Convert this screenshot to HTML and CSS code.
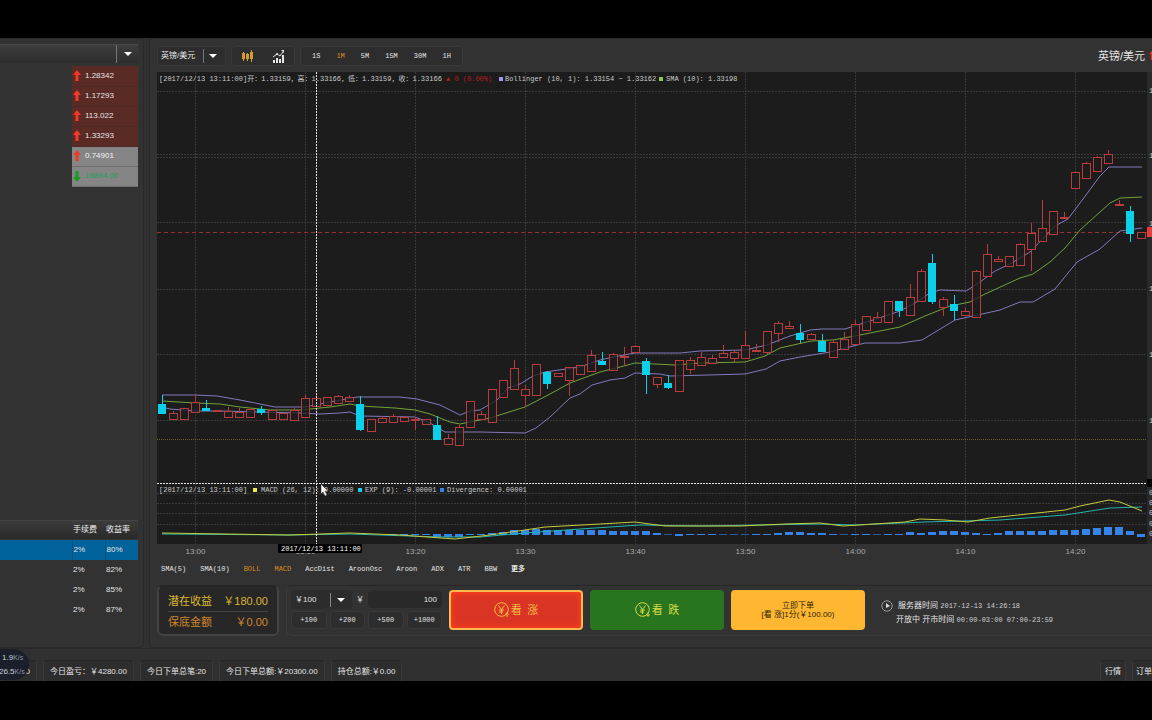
FILE: index.html
```html
<!DOCTYPE html>
<html lang="zh-CN">
<head>
<meta charset="utf-8">
<title>英镑/美元</title>
<link rel="stylesheet" href="styles.css">
</head>
<body>
<div class="app">
  <div class="workspace">
    <aside class="side">
      <div class="side-select"><button class="side-toggle" aria-label="展开"><span class="caret"></span></button></div>
      <table class="quotes">
        <tr><td><svg class="arrow up" viewBox="0 0 8 12"><path d="M4 0 8 5H5.500v6h-3V5H0z"/></svg>1.28342</td></tr>
        <tr><td><svg class="arrow up" viewBox="0 0 8 12"><path d="M4 0 8 5H5.500v6h-3V5H0z"/></svg>1.17293</td></tr>
        <tr><td><svg class="arrow up" viewBox="0 0 8 12"><path d="M4 0 8 5H5.500v6h-3V5H0z"/></svg>113.022</td></tr>
        <tr><td><svg class="arrow up" viewBox="0 0 8 12"><path d="M4 0 8 5H5.500v6h-3V5H0z"/></svg>1.33293</td></tr>
        <tr class="flat"><td><svg class="arrow up" viewBox="0 0 8 12"><path d="M4 0 8 5H5.500v6h-3V5H0z"/></svg>0.74901</td></tr>
        <tr class="flat down"><td><svg class="arrow" viewBox="0 0 8 12"><path d="M4 12 8 7H5.500V1h-3v6H0z"/></svg>16894.00</td></tr>
      </table>
      <table class="rates">
        <thead><tr><th></th><th>手续费</th><th>收益率</th></tr></thead>
        <tbody>
          <tr class="selected"><td></td><td>2%</td><td>80%</td></tr>
          <tr><td></td><td>2%</td><td>82%</td></tr>
          <tr><td></td><td>2%</td><td>85%</td></tr>
          <tr><td></td><td>2%</td><td>87%</td></tr>
        </tbody>
      </table>
    </aside>

    <main class="main">
      <header class="toolbar">
        <div class="group pick">
          <select class="pair" aria-label="品种"><option>英镑/美元</option></select>
          <span class="caret"></span>
        </div>
        <div class="group types">
          <button aria-label="蜡烛图"><svg width="12" height="14" viewBox="0 0 12 14" fill="#d29a31"><path d="M1 3h1v1h1v6H2v2H1v-2H0V4h1zM5 4h1v1h1v5H6v2H5v-2H4V5h1zM9 1h1v2h1v7h-1v3H9v-3H8V3h1z"/></svg></button>
          <button aria-label="指标"><svg width="12" height="13" viewBox="0 0 12 13" fill="#e6e6e6"><path d="M0 10h2v3H0zM3 8h2v5H3zM6 9h2v4H6zM9 5h2v8H9z"/><path d="M0 7 4 4l3 2 3-4" fill="none" stroke="#e6e6e6"/><circle cx="4" cy="4" r="1"/><path d="M8 0h3v3z"/></svg></button>
        </div>
        <div class="group periods">
          <button>1S</button><button class="on">1M</button><button>5M</button><button>15M</button><button>30M</button><button>1H</button>
        </div>
        <h1 class="title">英镑/美元<svg width="7" height="10" viewBox="0 0 8 12"><path fill="#e23a2a" d="M4 0 8 5H6v7H2V5H0z"/></svg></h1>
      </header>

      <svg class="chart" id="chart" viewBox="157 72 995 486" role="img" aria-label="英镑/美元 1M"></svg>

      <nav class="indicators">
        <button>SMA(5)</button><button>SMA(10)</button><button class="on">BOLL</button><button class="on">MACD</button><button>AccDist</button><button>AroonOsc</button><button>Aroon</button><button>ADX</button><button>ATR</button><button>BBW</button><button class="more">更多</button>
      </nav>

      <section class="trade">
        <dl class="payout">
          <div><dt>潜在收益</dt><dd>￥180.00</dd></div>
          <div class="floor"><dt>保底金额</dt><dd>￥0.00</dd></div>
        </dl>
        <div class="order">
          <div class="amount">
            <div class="amount-row">
              <div class="preset"><select aria-label="金额"><option>￥100</option></select><span class="caret"></span></div>
              <label for="sum">￥</label>
              <input id="sum" type="text" value="100">
            </div>
            <div class="adds"><button>+100</button><button>+200</button><button>+500</button><button>+1000</button></div>
          </div>
          <button class="action rise"><svg width="16" height="16" viewBox="0 0 16 16"><circle cx="7.500" cy="7.500" r="6.800"/><path d="M4.500 3.500l3 4 3-4M7.500 7.500V12M5 8h5M5 10h4M13 15v-4M11.500 12.500l1.500-2 1.500 2"/></svg>看&ensp;涨</button>
          <button class="action fall"><svg width="16" height="16" viewBox="0 0 16 16"><circle cx="7.500" cy="7.500" r="6.800"/><path d="M4.500 3.500l3 4 3-4M7.500 7.500V12M5 8h5M5 10h4M13 10v4M11.500 12.500l1.500 2 1.500-2"/></svg>看&ensp;跌</button>
          <button class="action submit"><span>立即下单</span><span>[看 涨]1分(￥100.00)</span></button>
          <div class="clock">
            <svg width="12" height="12" viewBox="0 0 12 12"><circle cx="6" cy="6" r="5.200" fill="none" stroke="#999"/><path d="M5 3v5l4-2z" fill="#ddd"/></svg>
            <p>服务器时间 <span>2017-12-13 14:26:18</span></p>
            <p class="hours">开放中 开市时间 <span>00:00-03:00 07:00-23:59</span></p>
          </div>
        </div>
      </section>
    </main>
  </div>

  <footer class="status">
    <span class="chip first">.0</span>
    <span class="chip">今日盈亏：￥4280.00</span>
    <span class="chip">今日下单总笔:20</span>
    <span class="chip">今日下单总额:￥20300.00</span>
    <span class="chip">持仓总额:￥0.00</span>
    <button class="chip tab">行情</button>
    <button class="chip orders">订单</button>
    <div class="speed"><span>1.9<small>K/s</small></span><span>26.5<small>K/s</small></span></div>
  </footer>
</div>
<script src="chart.js"></script>
</body>
</html>
```

FILE: styles.css
```css
* { box-sizing: border-box; }

body {
  margin: 0;
  background: #000;
  color: #e4e4e4;
  font: 8px/10px "Liberation Sans", "Noto Sans CJK SC", sans-serif;
  overflow: hidden;
}

button, select, input {
  margin: 0;
  padding: 0;
  border: 0;
  background: none;
  color: inherit;
  font: inherit;
  appearance: none;
  white-space: nowrap;
}

h1, p, dl, dd { margin: 0; }
table { border-collapse: collapse; }
th, td { padding: 0; text-align: left; font-weight: normal; }

.app {
  display: flex;
  flex-direction: column;
  height: 100vh;
  border: solid #000;
  border-width: 38px 0 39px;
  background: #303030;
}

.workspace { display: flex; flex: 1; min-height: 0; gap: 5px; border-bottom: 1px solid #292929; }

.caret {
  width: 0;
  height: 0;
  border: 4px solid transparent;
  border-top-color: #fff;
  border-bottom: 0;
  pointer-events: none;
}

/* left column */
.side {
  display: flex;
  flex-direction: column;
  justify-content: space-between;
  width: 144px;
  padding: 5px 5px 27px 0;
  border: 1px solid #292929;
  border-left: 0;
  border-radius: 0 0 5px 0;
  background: #323232;
}
.side-select {
  display: flex;
  justify-content: flex-end;
  height: 19px;
  margin-bottom: 3px;
  border-top: 1px solid #484848;
  background: linear-gradient(#3d3d3d, #2d2d2d);
}
.side-toggle { display: grid; place-items: center; width: 22px; border-left: 1px solid #777; }

.quotes { width: 66px; margin: 0 0 auto auto; }
.quotes td { height: 20px; background: #5a2a25; border-bottom: 1px solid #4c2925; }
.quotes .flat td { background: #858585; border-color: #6e6e6e; color: #f4f4f4; }
.quotes .down td { color: #20a060; }
.arrow { width: 8px; height: 12px; margin: 0 4px 0 1px; fill: #169c23; vertical-align: middle; }
.arrow.up { fill: #f23a2a; }

.rates { width: 100%; table-layout: fixed; }
.rates th { height: 20px; background: linear-gradient(#3c3c3c, #292929); color: #f0f0f0; border-top: 1px solid #444; }
.rates td { height: 20px; padding-left: 1px; }
.rates th:nth-child(2), .rates th:nth-child(3) { width: 33px; padding-left: 1px; }
.rates .selected td { background: #02639c; }
.rates .selected td + td { border-left: 1px solid #075080; }

/* chart column */
.main {
  display: flex;
  flex: 1;
  flex-direction: column;
  min-width: 0;
  padding: 7px 0 11px 7px;
  border: 1px solid #292929;
  border-right: 0;
  border-radius: 0 0 0 5px;
  background: #323232;
}
.toolbar { display: flex; align-items: center; height: 20px; margin-bottom: 6px; gap: 5px; }
.group { display: flex; align-items: center; height: 20px; border: 1px solid #393939; border-radius: 4px; background: #2d2d2d; }
.pick { width: 69px; padding-left: 3px; }
.pair { width: 43px; height: 14px; border-right: 1px solid #777; }
.pick .caret { margin-left: 5px; }
.types { width: 64px; }
.types button { display: grid; flex: 1; place-items: center; }
.periods { padding: 0 3px; font-family: "Liberation Mono", monospace; font-size: 7px; }
.periods button { padding: 0 8px; }
.on { color: #dc8b1c; }
.title { margin-left: auto; width: 54px; overflow: hidden; white-space: nowrap; font-size: 11px; line-height: 18px; font-weight: normal; }
.title svg { margin-left: 4px; }

.chart { display: block; width: 100%; height: auto; }
.chart text { fill: #c9c9c9; font: 7px "Liberation Mono", "Noto Sans CJK SC", monospace; white-space: pre; }
.chart .tick { fill: #aaa; font: 8px "Liberation Sans", sans-serif; text-anchor: middle; }
.chart .loss { fill: #b32018; }
.chart .now { fill: #fff; }
.grid { stroke: #3a3a3a; stroke-dasharray: 2 1; }
.line { fill: none; stroke-width: 1; }

.indicators { display: flex; align-items: center; gap: 14px; height: 22px; margin: 0 0 5px 4px; font-family: "Liberation Mono", "Noto Sans CJK SC", monospace; font-size: 7px; }
.more { font-weight: bold; }

.trade { display: flex; gap: 7px; height: 51px; }
.payout {
  width: 122px;
  padding: 4px 9px;
  border: 2px solid #434343;
  border-top-color: #262626;
  border-radius: 6px;
  background: #272727;
  font-size: 11px;
  line-height: 20px;
  color: #d9b630;
}
.payout div { display: flex; justify-content: space-between; }
.payout .floor { border-top: 1px solid #444; color: #cf852a; }

.order {
  display: flex;
  flex: 1;
  gap: 7px;
  padding: 4px;
  border: 1px solid #3b3b3b;
  border-top-color: #272727;
  border-right: 0;
  border-radius: 6px 0 0 6px;
}
.amount { width: 151px; }
.amount-row { display: flex; align-items: center; gap: 4px; height: 19px; margin-bottom: 2px; }
.preset { display: flex; align-items: center; gap: 6px; width: 61px; height: 19px; padding-left: 4px; border-radius: 4px; background: #2c2c2c; }
.preset select { width: 36px; height: 14px; border-right: 1px solid #888; }
.amount-row input { flex: 1; min-width: 0; height: 17px; padding-right: 5px; border-radius: 4px; background: #292929; text-align: right; }
.adds { display: grid; grid-template-columns: repeat(4, 1fr); gap: 3px; }
.adds button { height: 18px; border: 1px solid #393939; border-radius: 4px; background: #2d2d2d; font-family: "Liberation Mono", monospace; font-size: 7px; }

.action { display: flex; align-items: center; justify-content: center; gap: 1px; width: 134px; height: 40px; border-radius: 4px; font-size: 11px; color: #f6bd45; }
.action svg { fill: none; stroke: currentColor; }
.rise { border: 2px solid #ffb951; background: #da3524; box-shadow: inset 0 0 5px 2px #fa3c1c; }
.fall { background: #29751f; color: #d5d947; }
.submit { flex-direction: column; gap: 0; background: #ffb732; color: #2b1c08; font-size: 8px; line-height: 9px; }

.clock { display: grid; grid-template-columns: 12px auto; align-content: center; align-items: center; gap: 3px 5px; padding: 3px 0 0 9px; white-space: nowrap; }
.clock span { font-family: "Liberation Mono", monospace; font-size: 7px; color: #d0d0d0; }
.hours { grid-column: 1 / 3; padding-left: 15px; }

/* bottom strip */
.status { position: relative; display: flex; align-items: center; gap: 6px; height: 32px; padding-top: 12px; overflow: hidden; white-space: nowrap; }
.chip { height: 22px; padding: 0 6px; border: 1px solid #393939; border-top-color: #262626; border-radius: 4px; background: #2d2d2d; line-height: 22px; }
.first { width: 37px; text-align: right; }
.tab { margin-left: auto; padding: 0 4px; }
.orders { width: 22px; margin-right: -2px; padding: 0 3px; overflow: hidden; text-align: left; }
.speed {
  position: absolute;
  top: 0;
  left: -14px;
  display: flex;
  flex-direction: column;
  justify-content: center;
  gap: 4px;
  width: 43px;
  height: 31px;
  padding-left: 13px;
  border-radius: 16px;
  background: #1b1f2b;
  color: #cbd0dc;
}
.speed span:first-child { padding-left: 3px; }
.speed small { font-size: 7px; color: #8b93a5; }
```

FILE: chart.js
```js
// body top, body bottom, high, low, 1 when the candle falls
const candles = [
  [404,414,395,414,1],[413,420,411,420],[408,420,408,420],[402,413,395,413],[408,411,400,411,1],[410,411,410,411],
  [411,418,407,418],[412,418,408,418],[409,418,409,418],[409,413,406,415,1],[410,420,410,420],[413,420,413,420],
  [410,421,408,421],[398,418,395,418],[398,407,395,407],[397,406,397,406],[396,404,395,404],[397,402,395,402],
  [404,430,396,431,1],[419,432,419,432],[418,423,416,423],[416,423,414,423],[417,422,416,422],[419,421,417,430],
  [419,425,419,425],[425,440,416,440,1],[438,445,434,445],[427,446,425,446],[401,428,401,428],[414,420,411,420],
  [389,423,389,423],[380,398,380,398],[368,390,360,390],[389,396,385,407],[364,396,364,396],[372,384,371,389,1],
  [373,377,373,377],[367,381,367,396],[365,375,365,375],[355,372,350,372],[361,365,352,365,1],[354,371,353,371],
  [356,357,347,366],[346,353,345,353],[361,375,358,394,1],[377,385,377,388],[383,388,375,389,1],[360,392,360,392],
  [360,370,357,374],[357,366,352,366],[358,364,355,364],[353,358,345,358],[352,359,350,362],[345,359,331,359],
  [350,351,344,352],[331,353,331,354],[323,334,321,342],[326,329,321,329],[333,340,324,343,1],[334,340,333,340],
  [341,352,334,352,1],[342,358,340,358],[339,350,332,350],[324,345,320,345],[316,331,316,331],[317,323,312,323],
  [301,323,301,323],[301,311,301,317,1],[297,316,284,316],[271,302,269,302],[263,302,254,304,1],[299,308,297,316],
  [304,311,295,320,1],[311,316,308,316],[271,318,270,318],[254,277,244,277],[259,262,256,262],[256,267,256,267],
  [244,266,243,266],[233,250,223,271],[228,242,200,242],[211,235,211,235],[217,219,212,219],[172,189,171,189],
  [163,179,162,179],[157,172,156,172],[154,164,150,164],[204,206,200,206],[211,234,206,242,1],[232,239,232,239]
];

// divergence bar heights, negative below the baseline
const bars = [0,0,0,0,0,0,0,0,0,0,0,0,0,0,0,0,0,0,0,0,0,-1,-1,-1,-1,-3,-3,-3,1,1,2,3,5,5,6,5,5,5,5,5,5,4,4,4,4,2,0,
  -2,-1,-1,-1,0,0,0,1,1,2,3,3,2,2,1,0,-1,-1,0,1,1,3,2,3,4,4,3,2,1,2,4,4,4,4,5,5,5,6,7,8,8,4,-3];

const bands = {
  upper: "162,395 195,395 217,396 240,400 275,407 305,407 330,402 357,397 400,397 417,399 440,405 460,415 470,411 480,410 497,400 508,388 520,384 533,376 545,372 580,367 600,360 613,357 635,353 680,353 700,351 745,350 767,345 790,336 810,330 822,329 845,329 870,321 900,311 915,303 930,293 940,290 966,291 980,282 995,271 1010,264 1030,252 1055,226 1068,219 1080,203 1100,176 1109,167 1142,167",
  middle: "162,401 195,403 220,404 240,407 270,410 300,410 330,407 350,404 360,406 395,408 415,410 430,414 450,422 460,424 475,421 490,418 525,407 550,394 570,383 600,372 620,367 635,363 675,365 700,363 745,362 765,356 780,348 811,341 833,340 860,335 900,327 925,316 950,306 970,302 985,294 1020,278 1033,274 1050,262 1065,248 1080,230 1110,203 1120,198 1142,197",
  lower: "162,407 170,409 195,411 220,411 260,412 300,413 320,414 340,413 350,412 360,416 415,417 430,423 445,432 480,432 525,433 536,428 550,417 570,398 580,394 592,385 610,380 625,378 635,373 660,374 670,376 745,374 766,369 780,361 800,357 830,352 865,343 900,343 922,340 955,320 1000,310 1020,302 1033,302 1055,289 1077,262 1100,249 1120,231 1142,228",
  signal: "162,534 290,535 350,534 440,537 480,537 525,533 580,529 640,525 700,526 820,524 855,525 925,522 1000,520 1065,515 1110,508 1142,507",
  macd: "162,533 290,535 350,533 400,535 455,539 490,535 525,530 545,527 600,524 635,522 650,524 665,526 740,526 785,524 820,523 843,526 905,522 920,519 945,520 968,522 990,518 1065,510 1080,506 1109,500 1120,502 1142,511"
};

const out = [];
const rect = (x, y, w, h, fill, extra = "") => out.push(`<rect x="${x}" y="${y}" width="${w}" height="${h}" fill="${fill}" ${extra}/>`);
const path = (d, stroke, extra = "") => out.push(`<path d="${d}" stroke="${stroke}" fill="none" ${extra}/>`);
const text = (x, y, s, cls = "") => out.push(`<text x="${x}" y="${y}" class="${cls}">${s}</text>`);
const line = (points, stroke) => out.push(`<polyline class="line" points="${points}" stroke="${stroke}"/>`);

rect(157, 72, 990, 472, "#1c1c1c");
rect(1147, 72, 5, 472, "#292929");

[91.5, 154.5, 157.5, 222.5, 289.5, 354.5, 420.5, 493.5, 503.5, 513.5, 524.5].forEach(y => out.push(`<path class="grid" d="M157 ${y}H1147"/>`));
for (let i = 0; i < 9; i++) {
  const x = 195.5 + i * 110;
  out.push(`<path class="grid" d="M${x} 72V544"/>`);
  const m = 780 + i * 10;
  text(x, 554, Math.floor(m / 60) + ":" + String(m % 60).padStart(2, "0"), "tick");
}
path("M157 439.5H1147", "#6a6128", 'stroke-dasharray="1 1"');
path("M157 232.5H1147", "#9a2f2f", 'stroke-dasharray="4 3"');

line(bands.upper, "#8379bd");
line(bands.lower, "#8379bd");
line(bands.middle, "#72a238");

candles.forEach(([top, bottom, high, low, falls], i) => {
  const x = 162 + i * 11;
  const color = falls ? "#0bd0ea" : "#b63c3d";
  path(`M${x + .5} ${high}V${top}M${x + .5} ${bottom}V${low}`, color);
  if (falls) rect(x - 4, top, 8, bottom - top, color);
  else rect(x - 3.5, top + .5, 8, Math.max(bottom - top - 1, 1), "#1c1c1c", `fill-opacity=".75" stroke="${color}"`);
});

bars.forEach((h, i) => {
  if (h) rect(158 + i * 11, h > 0 ? 535 - h : 534, 8, Math.abs(h), "#3784e8");
  else if (i > 20) rect(158 + i * 11, 534, 8, 1, "#285b99");
});
line(bands.signal, "#22b5b0");
line(bands.macd, "#c7cc3d");

text(159, 81, "[2017/12/13 13:11:00]开：1.33159，高：1.33166，低：1.33159，收：1.33166");
text(446, 81, "▲ 0 (0.00%)", "loss");
rect(499, 77, 4, 4, "#a394e8");
text(505, 81, "Bollinger (10, 1): 1.33154 ~ 1.33162");
rect(659, 77, 4, 4, "#8fc653");
text(666, 81, "SMA (10): 1.33198");

text(159, 492, "[2017/12/13 13:11:00]");
rect(253, 488, 4, 4, "#f4e846");
text(261, 492, "MACD (26, 12): 0.00000");
rect(358, 488, 4, 4, "#18cfe8");
text(365, 492, "EXP (9): -0.00001");
rect(440, 488, 4, 4, "#3784e8");
text(447, 492, "Divergence: 0.00001");

path("M316.5 72V544M157 483.5H1147", "#e5e5e5", 'stroke-dasharray="2 1"');
rect(278, 544, 84, 9, "#000");
text(281, 551, "2017/12/13 13:11:00", "now");

[93, 158, 226, 291, 357, 423].forEach(y => text(1149, y, "1"));
rect(1147, 227, 5, 10, "#e23c3c");
rect(1147, 479, 5, 8, "#000");
[495, 505, 515, 526, 536].forEach(y => text(1149, y, "0"));

out.push('<path d="M321 484v10l2-2 2 4 2-1-2-4h3z" fill="#fff" stroke="#222" stroke-width=".5"/>');
document.getElementById("chart").innerHTML = out.join("");
```
